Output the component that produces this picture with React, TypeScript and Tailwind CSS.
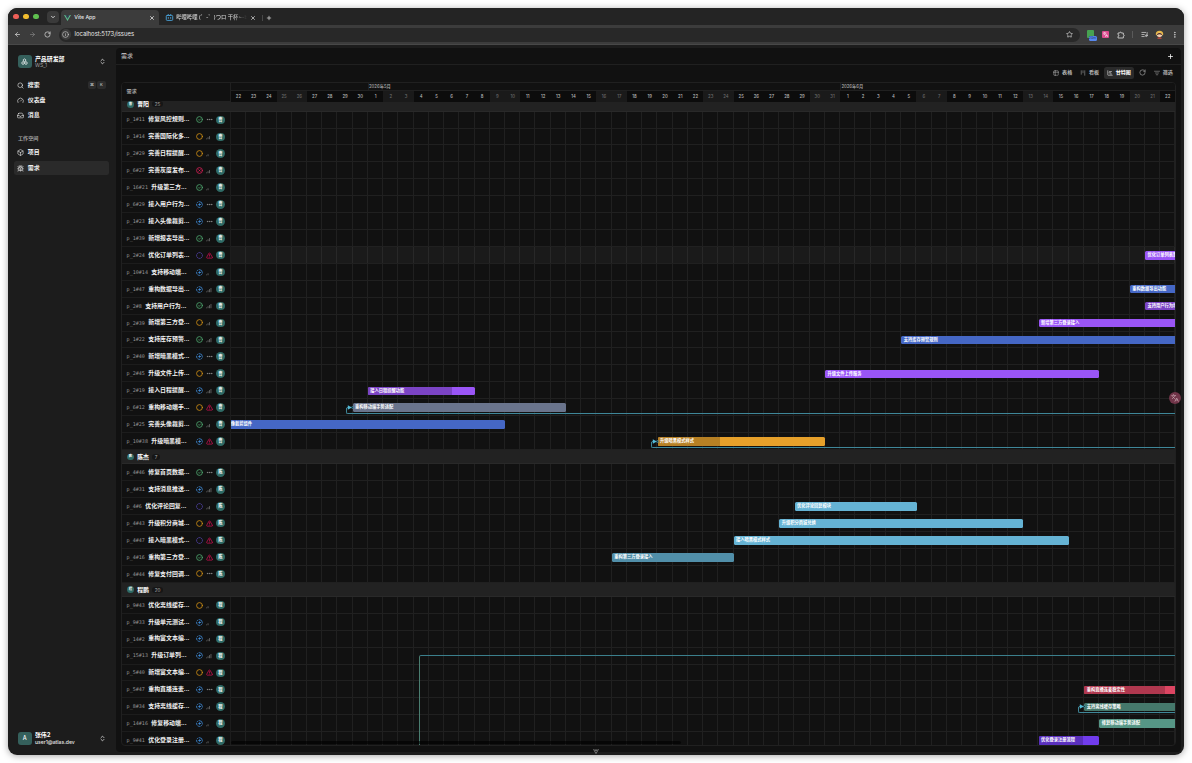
import type { ReactNode } from "react"
import {
  ArrowLeft,
  ArrowRight,
  Box,
  Bug,
  ChartGantt,
  ChevronDown,
  ChevronsUpDown,
  CircleDashed,
  Ellipsis,
  EllipsisVertical,
  Gauge,
  Inbox,
  Info,
  Kanban,
  Languages,
  ListFilter,
  ListMusic,
  Plus,
  RotateCw,
  Search,
  Star,
  Table2,
  TriangleAlert,
  X,
} from "lucide-react"

const DAY = 15.24

type Status = "done" | "todo" | "cancel" | "progress" | "backlog"
type Priority = "none" | "low" | "medium" | "high" | "urgent"

type Bar = {
  start: number
  end: number
  label: string
  color: string
  // darker part of the bar, in days
  fill?: number
  fillColor?: string
  linked?: boolean
}

type Issue = {
  id: string
  title: string
  status: Status
  priority: Priority
  bar?: Bar
  hover?: boolean
}

const row = (id: string, title: string, status: Status, priority: Priority, bar?: Bar, hover?: boolean): Issue => ({
  id,
  title,
  status,
  priority,
  bar,
  hover,
})

const groups: { name: string; count: number; issues: Issue[] }[] = [
  {
    name: "曹阳",
    count: 25,
    issues: [
      row("p_1#11", "修复风控规则...", "done", "none"),
      row("p_1#14", "完善国际化多...", "todo", "medium"),
      row("p_2#29", "完善日程提醒...", "todo", "low"),
      row("p_6#27", "完善灰度发布...", "cancel", "medium"),
      row("p_16#21", "升级第三方...", "done", "low"),
      row("p_6#29", "接入用户行为...", "progress", "none"),
      row("p_1#23", "接入头像裁剪...", "progress", "none"),
      row("p_1#39", "新增报表导出...", "done", "medium"),
      row("p_2#24", "优化订单列表...", "backlog", "urgent", { start: 60, end: 70, label: "优化订单列表默认排序", color: "#9a55f6" }, true),
      row("p_10#14", "支持移动端...", "progress", "low"),
      row("p_1#47", "重构数据导出...", "progress", "high", { start: 59, end: 70, label: "重构数据导出功能", color: "#4567c5" }),
      row("p_2#8", "支持用户行为...", "done", "high", { start: 60, end: 70, label: "支持用户行为埋点", color: "#7b44c5" }),
      row("p_2#39", "新增第三方登...", "todo", "medium", { start: 53, end: 70, label: "新增第三方登录接入", color: "#9a55f6" }),
      row("p_1#22", "支持库存预警...", "done", "high", { start: 44, end: 70, label: "支持库存预警规则", color: "#4567c5" }),
      row("p_2#40", "新增暗黑模式...", "progress", "none"),
      row("p_2#45", "升级文件上传...", "todo", "none", { start: 39, end: 57, label: "升级文件上传服务", color: "#9a55f6" }),
      row("p_2#19", "接入日程提醒...", "progress", "high", { start: 9, end: 16, label: "接入日程提醒功能", color: "#9a55f6", fill: 5.5, fillColor: "#7b44c5" }),
      row("p_6#12", "重构移动端手...", "todo", "urgent", { start: 8, end: 22, label: "重构移动端手势适配", color: "#6a748c", linked: true }),
      row("p_1#25", "完善头像裁剪...", "done", "medium", { start: -1, end: 18, label: "完善头像裁剪组件", color: "#4567c5" }),
      row("p_10#38", "升级暗黑模...", "progress", "urgent", { start: 28, end: 39, label: "升级暗黑模式样式", color: "#e6a02a", fill: 4.1, fillColor: "#b68024", linked: true }),
    ],
  },
  {
    name: "陈杰",
    count: 7,
    issues: [
      row("p_4#46", "修复首页数据...", "done", "none"),
      row("p_4#31", "支持消息推送...", "progress", "high"),
      row("p_4#6", "优化评论回复...", "backlog", "medium", { start: 37, end: 45, label: "优化评论回复模块", color: "#65b3d4" }),
      row("p_4#43", "升级积分商城...", "todo", "urgent", { start: 36, end: 52, label: "升级积分商城兑换", color: "#65b3d4" }),
      row("p_4#47", "接入暗黑模式...", "backlog", "urgent", { start: 33, end: 55, label: "接入暗黑模式样式", color: "#65b3d4" }),
      row("p_4#16", "重构第三方登...", "done", "urgent", { start: 25, end: 33, label: "重构第三方登录接入", color: "#518fa9" }),
      row("p_4#44", "修复支付回调...", "todo", "none"),
    ],
  },
  {
    name: "程鹏",
    count: 20,
    issues: [
      row("p_9#43", "优化离线缓存...", "todo", "low"),
      row("p_9#33", "升级单元测试...", "progress", "low"),
      row("p_14#2", "重构富文本编...", "progress", "medium"),
      row("p_15#13", "升级订单列...", "progress", "high"),
      row("p_5#40", "新增富文本编...", "todo", "urgent"),
      row("p_5#47", "重构直播连麦...", "progress", "none", { start: 56, end: 70, label: "重构直播连麦稳定性", color: "#dc4562", fill: 5.3, fillColor: "#b0384f" }),
      row("p_8#34", "支持离线缓存...", "progress", "medium", { start: 56, end: 70, label: "支持离线缓存策略", color: "#45786b", linked: true }),
      row("p_14#16", "修复移动端...", "progress", "low", { start: 57, end: 70, label: "修复移动端手势适配", color: "#569686" }),
      row("p_9#41", "优化登录注册...", "progress", "low", { start: 53, end: 57, label: "优化登录注册流程", color: "#713ced", fill: 2.95, fillColor: "#5a30be" }),
    ],
  },
]

// 22 Apr 2026 - 22 Jun 2026
const days = Array.from({ length: 62 }, (_, i) => {
  const date = new Date(Date.UTC(2026, 3, 22 + i))
  const weekday = date.getUTCDay()
  return { label: date.getUTCDate(), weekend: weekday === 0 || weekday === 6 }
})

const statusColors: Record<Status, string> = {
  done: "text-[#4fa86f]",
  todo: "text-[#d08f14]",
  cancel: "text-[#d61f54]",
  progress: "text-[#3f8bd6]",
  backlog: "text-[#5546b0]",
}

function StatusIcon({ status }: { status: Status }) {
  if (status === "backlog") {
    return <CircleDashed className={`size-[7px] overflow-visible ${statusColors.backlog}`} strokeWidth={3} />
  }
  return (
    <svg
      className={`size-[7px] overflow-visible ${statusColors[status]}`}
      viewBox="0 0 24 24"
      fill="none"
      stroke="currentColor"
      strokeWidth="2.8"
      strokeLinecap="round"
    >
      {status === "progress" ? (
        <>
          <path d="M12 2a10 10 0 0 1 10 10" />
          <path d="M21 16.5a10 10 0 0 1-4.5 4.5M12 22a10 10 0 0 1-5.5-1.6M3 16.5a10 10 0 0 1-1-5.5M4 6a10 10 0 0 1 3-2.600" />
          <circle cx="12" cy="12" r="2.5" fill="currentColor" />
        </>
      ) : (
        <circle cx="12" cy="12" r="10" />
      )}
      {status === "done" && <path d="M8.5 12.500l2.500 2.500 4.500-5" strokeWidth="2.400" />}
      {status === "cancel" && <path d="M9.500 9.500l5 5M14.500 9.500l-5 5" />}
    </svg>
  )
}

function PriorityIcon({ priority }: { priority: Priority }) {
  if (priority === "urgent") return <TriangleAlert className="size-[7px] overflow-visible text-[#c8104e]" strokeWidth={2.6} />
  if (priority === "none") return <Ellipsis className="size-[7px] overflow-visible text-[#8d8d8d]" strokeWidth={2.8} />
  return (
    <svg className="size-[7px] overflow-visible text-[#858585]" viewBox="0 0 24 24" fill="none" stroke="currentColor" strokeWidth="2.200" strokeLinecap="round">
      <path d="M2 20h.01" />
      <path d="M7 20v-4" />
      {priority !== "low" && <path d="M12 20v-8" />}
      {priority === "high" && <path d="M17 20V8" />}
    </svg>
  )
}

function GanttBar({ bar }: { bar: Bar }) {
  return (
    <div
      className="absolute top-[4.2px] h-[8.5px] overflow-hidden rounded-[1.5px]"
      style={{ left: bar.start * DAY, width: (bar.end - bar.start) * DAY, backgroundColor: bar.color }}
    >
      {bar.fill && <div className="absolute inset-y-0 left-0" style={{ width: bar.fill * DAY, backgroundColor: bar.fillColor }} />}
      <span className="relative block pl-[2.4px] text-[4.25px] leading-[8.5px] font-bold whitespace-nowrap text-white">{bar.label}</span>
    </div>
  )
}

// dependency line that enters the bar from the right side of the chart
function Dependency({ start }: { start: number }) {
  return (
    <>
      <div
        className="absolute top-[9px] right-0 h-[6px] rounded-bl-[2px] border-b border-l border-[#3f8799]"
        style={{ left: start * DAY - 6.5 }}
      />
      <svg className="absolute top-[5px] h-[7px] w-[8px] overflow-visible" style={{ left: start * DAY - 6.5 }} viewBox="0 0 8 7">
        <path d="M.5 5V4.500Q.5 3.500 2 3.500" fill="none" stroke="#3f8799" />
        <path d="M1.800 1.200L5.800 3.500L1.800 5.700Z" fill="#55bcd8" />
        <circle cx="6.500" cy="3.500" r="1" fill="#1b3d47" stroke="#4fb0cc" strokeWidth=".5" />
      </svg>
    </>
  )
}

function IssueRow({ issue, avatar }: { issue: Issue; avatar: string }) {
  return (
    <div className="flex h-[16.93px] shrink-0">
      <div className="flex w-[108.8px] shrink-0 items-center border-b border-[#1c1c1c] pt-[0.6px] pl-[4.6px]">
        <span className="pt-[0.8px] font-['DejaVu_Sans_Mono'] text-[5.07px] text-[#949494]">{issue.id}</span>
        <span className="ml-[3.4px] text-[5.93px] font-semibold whitespace-nowrap text-[#f2f2f2]">{issue.title}</span>
        <div className="ml-auto flex items-center pr-[6.2px]">
          <StatusIcon status={issue.status} />
          <div className="ml-[3.2px]">
            <PriorityIcon priority={issue.priority} />
          </div>
          <span className="ml-[3.4px] grid size-[8.5px] place-items-center rounded-full bg-[#2f6b66] text-[4.25px] leading-none font-bold text-white">
            {avatar}
          </span>
        </div>
      </div>
      <div className={`relative flex-1 overflow-hidden border-b border-[#202020] ${issue.hover ? "bg-white/4" : ""}`}>
        {issue.bar && <GanttBar bar={issue.bar} />}
        {issue.bar?.linked && <Dependency start={issue.bar.start} />}
      </div>
    </div>
  )
}

function GroupRow({ name, count }: { name: string; count: number }) {
  return (
    <div className="flex h-[14.2px] shrink-0 items-center border-b border-[#292929] bg-[#222222] pt-[0.6px] pl-[5px]">
      <span className="grid size-[6.8px] place-items-center rounded-full bg-[#2f6b66] text-[3.4px] leading-none font-bold text-white">
        {name[0]}
      </span>
      <span className="ml-[3.4px] text-[5.93px] leading-[8px] font-bold text-white">{name}</span>
      <span className="ml-[3px] rounded-full bg-[#161616] px-[2.6px] text-[4.66px] leading-[6px] text-[#a8a8a8]">{count}</span>
    </div>
  )
}

function Gantt() {
  return (
    <div className="relative mx-[5px] mb-[6px] flex min-h-0 flex-1 flex-col overflow-hidden rounded-[4px] border border-[#202020]">
      {/* Header */}
      <div className="relative z-10 flex h-[18.4px] shrink-0 bg-[#111111]">
        <div className="flex w-[108.8px] shrink-0 items-center border-r border-[#202020] pl-[4.6px] text-[5.08px] font-semibold text-[#a3a3a3]">
          需求
        </div>
        <div className="flex min-w-0 flex-1 flex-col">
          <div className="flex h-[8.4px] border-b border-[#202020] text-[4.25px] leading-[8px] font-medium text-[#b0b0b0]">
            <div className="w-[137.2px] shrink-0" />
            <div className="w-[472.4px] shrink-0 border-l border-[#202020]">2026年5月</div>
            <div className="border-l border-[#202020]">2026年6月</div>
          </div>
          <div className="flex flex-1">
            {days.map((day, i) => (
              <div
                key={i}
                className={`w-[15.24px] shrink-0 text-center text-[4.25px] leading-[11.4px] font-medium ${
                  day.weekend ? "bg-[#1a1a1a] text-[#6c6c6c]" : "bg-[#0c0c0c] text-[#bdbdbd]"
                }`}
              >
                {day.label}
              </div>
            ))}
          </div>
        </div>
      </div>

      {/* Rows */}
      <div className="relative min-h-0 flex-1">
        <div className="absolute inset-0 flex overflow-hidden">
          <div className="w-[108.8px] shrink-0 border-r border-[#1d1d1d]" />
          {days.map((_, i) => (
            <div key={i} className="w-[15.24px] shrink-0 border-r border-[#202020]" />
          ))}
        </div>
        <div className="relative -mt-[3.5px] flex flex-col">
          {groups.map((group) => (
            <div key={group.name}>
              <GroupRow name={group.name} count={group.count} />
              {group.issues.map((issue) => (
                <IssueRow key={issue.id} issue={issue} avatar={group.name[0]} />
              ))}
            </div>
          ))}
        </div>
        {/* Dependency that leaves the visible area */}
        <div className="absolute right-0 bottom-0 left-[297px] h-[90.5px] rounded-tl-[2px] border-t border-l border-t-[#3b7f8c] border-l-[#4a7d70]" />
        <div className="absolute bottom-[1px] left-[109px] h-[3px] w-[450px] rounded-full bg-black/60" />
      </div>
    </div>
  )
}

function NavItem({ icon, label, active, children }: { icon: ReactNode; label: string; active?: boolean; children?: ReactNode }) {
  return (
    <div
      className={`flex h-[13.5px] items-center rounded-[2.5px] px-[3.4px] pt-[0.5px] text-[5.93px] font-semibold text-[#efefef] ${
        active ? "bg-[#2a2a2a]" : ""
      }`}
    >
      {icon}
      <span className="ml-[3.4px]">{label}</span>
      {children}
    </div>
  )
}

function Sidebar() {
  return (
    <aside className="flex w-[108px] shrink-0 flex-col pt-[6.5px] pr-[7px] pb-[6.5px] pl-[6px]">
      <div className="flex h-[20px] items-center px-[4px]">
        <div className="grid size-[13.5px] place-items-center rounded-[3px] bg-[#35605c] text-white">
          <svg className="size-[7px] overflow-visible" viewBox="0 0 24 24" fill="none" stroke="currentColor" strokeWidth="2.5" strokeLinejoin="round">
            <path d="M12 3l4 2.4v4.6l-4 2.4-4-2.4V5.4zM7 12.5l4 2.4v4.600L7 22l-4-2.500v-4.600zM17 12.500l4 2.400v4.600L17 22l-4-2.500v-4.600z" />
          </svg>
        </div>
        <div className="ml-[3.4px] flex flex-col">
          <span className="text-[5.93px] leading-[7.5px] font-bold text-white">产品研发部</span>
          <span className="text-[5.08px] leading-[6.5px] text-[#a0a0a0]">WS_1</span>
        </div>
        <ChevronsUpDown className="-mr-[1px] ml-auto size-[7px] overflow-visible text-[#e5e5e5]" strokeWidth={2.6} />
      </div>

      <nav className="mt-[6.5px] flex flex-col gap-[1.7px]">
        <NavItem icon={<Search className="size-[7px] overflow-visible" />} label="搜索">
          <div className="ml-auto flex gap-[1px] text-[4px] leading-[8px] text-[#b0b0b0]">
            <kbd className="w-[8.5px] rounded-[2px] bg-[#2c2c2c] text-center font-sans">⌘</kbd>
            <kbd className="w-[8.5px] rounded-[2px] bg-[#2c2c2c] text-center font-['Inter']">K</kbd>
          </div>
        </NavItem>
        <NavItem icon={<Gauge className="size-[7px] overflow-visible" />} label="仪表盘" />
        <NavItem icon={<Inbox className="size-[7px] overflow-visible" />} label="消息" />
      </nav>

      <div className="mt-[10.5px] px-[4px] text-[5.08px] leading-[13.5px] font-semibold text-[#a3a3a3]">工作空间</div>
      <nav className="flex flex-col gap-[1.7px]">
        <NavItem icon={<Box className="size-[7px] overflow-visible" />} label="项目" />
        <NavItem icon={<Bug className="size-[7px] overflow-visible" />} label="需求" active />
      </nav>

      <div className="mt-auto flex h-[20px] items-center px-[4px]">
        <div className="grid size-[13.5px] place-items-center rounded-[3px] bg-[#35605c] text-[5.5px] font-medium text-white">A</div>
        <div className="ml-[3.4px] flex flex-col">
          <span className="text-[5.93px] leading-[7.5px] font-bold text-white">张伟2</span>
          <span className="text-[5.08px] leading-[7px] font-medium text-[#e5e5e5]">user1@atlas.dev</span>
        </div>
        <ChevronsUpDown className="-mr-[1px] ml-auto size-[7px] overflow-visible text-[#e5e5e5]" strokeWidth={2.6} />
      </div>
    </aside>
  )
}

function ViewTab({ icon, label, active }: { icon: ReactNode; label?: string; active?: boolean }) {
  return (
    <div
      className={`flex h-[11.8px] items-center gap-[2.6px] rounded-[2.5px] px-[3.2px] text-[5.08px] font-semibold ${
        active ? "bg-[#2a2a2a] text-white" : "text-[#b5b5b5]"
      }`}
    >
      {icon}
      {label && <span>{label}</span>}
    </div>
  )
}

function BrowserChrome() {
  return (
    <header className="shrink-0">
      {/* Tabs */}
      <div className="flex h-[17px] items-end bg-[#242424]">
        <div className="flex h-full items-center gap-[4.2px] pl-[5px]">
          <span className="size-[5.8px] rounded-full bg-[#ed5f57]" />
          <span className="size-[5.8px] rounded-full bg-[#f2bd2e]" />
          <span className="size-[5.8px] rounded-full bg-[#5fc04f]" />
        </div>
        <div className="mb-[2px] ml-[8px] grid size-[12px] place-items-center rounded-[4px] bg-[#3a3a3a]">
          <ChevronDown className="size-[6px] text-white" strokeWidth={3} />
        </div>
        <div className="ml-[2px] flex h-[15px] w-[98px] items-center rounded-t-[4px] bg-[#3c3c3c] px-[3.5px] text-[5.2px] font-medium text-[#e8e8e8]">
          <svg className="h-[6px] w-[7px]" viewBox="0 0 28 24">
            <path d="M0 0h5.6L14 14.5 22.4 0H28L14 24z" fill="#5dbb8a" />
            <path d="M5.6 0h5.2L14 5.5 17.2 0h5.2L14 14.5z" fill="#35495e" />
          </svg>
          <span className="ml-[3px]">Vite App</span>
          <X className="ml-auto size-[6px]" strokeWidth={3} />
        </div>
        <div className="flex h-[15px] w-[99px] items-center pr-[2px] pl-[7px] text-[5.3px] font-medium text-[#d0d0d0]">
          <svg className="size-[7px] shrink-0 overflow-visible text-[#4aa7df]" viewBox="0 0 24 24" fill="none" stroke="currentColor" strokeWidth="3" strokeLinecap="round">
            <rect x="1" y="5" width="22" height="17" rx="3" />
            <path d="M7 1l3 3M17 1l-3 3M8 12v3M16 12v3" />
          </svg>
          <span className="ml-[3.5px] w-[71px] overflow-hidden [mask-image:linear-gradient(to_right,black_80%,transparent)] whitespace-nowrap">
            哔哩哔哩 (゜-゜)つロ 干杯~-bilibili
          </span>
          <X className="ml-auto size-[6px] shrink-0" strokeWidth={3} />
        </div>
        <div className="mb-[4.5px] ml-[4px] h-[6px] w-px bg-[#484848]" />
        <Plus className="mb-[4.5px] ml-[3.5px] size-[6px] overflow-visible text-[#dedede]" strokeWidth={2.8} />
      </div>

      {/* Address bar */}
      <div className="flex h-[20px] items-center border-b border-[#484848] bg-[#3c3c3c] px-[6px] text-[#d4d4d4]">
        <ArrowLeft className="size-[7px]" strokeWidth={2.5} />
        <ArrowRight className="ml-[8px] size-[7px] text-[#808080]" strokeWidth={2.5} />
        <RotateCw className="ml-[8px] size-[7px] overflow-visible" strokeWidth={2.5} />
        <div className="ml-[7.5px] flex h-[14px] flex-1 items-center rounded-full bg-[#282828] pr-[7px] pl-[2px]">
          <span className="grid size-[10.5px] place-items-center rounded-full bg-[#3c3c3c]">
            <Info className="size-[7px] overflow-visible" />
          </span>
          <span className="ml-[3.5px] text-[5.9px] text-[#e8e8e8]">localhost:5173/issues</span>
          <Star className="ml-auto size-[7px] overflow-visible" strokeWidth={2.3} />
        </div>
        <div className="ml-[7px] flex items-center">
          <div className="relative size-[9px]">
            <div className="size-[7.5px] rounded-[1px] bg-[#47a251]" />
            <div className="absolute right-[-1px] bottom-[-1.5px] h-[5px] w-[8px] rounded-[1.5px] bg-[#5787ec] text-center text-[3.5px] leading-[5px] text-[#1c3470]">
              20m
            </div>
          </div>
          <div className="ml-[6.5px] grid size-[7px] place-items-center rounded-[1px] bg-[#dd4b8e]">
            <Languages className="size-[5px] text-white" strokeWidth={2.5} />
          </div>
          <svg className="ml-[8px] size-[8px] overflow-visible" viewBox="0 0 24 24" fill="none" stroke="currentColor" strokeWidth="2.6" strokeLinejoin="round">
            <path d="M3 6h5a2.500 2.500 0 0 1 5 0h6v5a2.500 2.500 0 0 1 0 5v5H3v-5a2.500 2.500 0 0 0 0-5z" />
          </svg>
          <div className="ml-[7px] h-[7px] w-px bg-[#5a5a5a]" />
          <ListMusic className="ml-[8px] size-[7px] overflow-visible" strokeWidth={2.5} />
          <svg className="ml-[7px] size-[9px]" viewBox="0 0 24 24">
            <path d="M2 12Q2 2 12 2t10 10l-3 2H5z" fill="#e8b84a" />
            <path d="M5 11q7-7 14 0v5q-7 6-14 0z" fill="#f3cfae" />
            <path d="M5 11q7-6 14 0l-1 2q-6-4-12 0z" fill="#4a2a20" />
            <path d="M8 20h8l2 3H6z" fill="#cf4a3c" />
          </svg>
          <EllipsisVertical className="ml-[6.5px] size-[7.5px]" strokeWidth={2.5} />
        </div>
      </div>
    </header>
  )
}

export default function App() {
  return (
    <div className="h-[763px] w-[1192px] overflow-hidden bg-white px-[8px] pt-[8px] font-['Inter','Noto_Sans_CJK_SC',sans-serif]">
      <div className="relative flex h-[747px] w-[1176px] flex-col overflow-hidden rounded-[9px] bg-[#1c1c1c] shadow-[0_1px_7px_rgba(0,0,0,0.35)]">
        <BrowserChrome />
        <div className="flex min-h-0 flex-1">
          <Sidebar />
          <main className="mt-[3px] mr-[3px] mb-[3px] flex min-w-0 flex-1 flex-col rounded-[4px] bg-[#111111]">
            <div className="flex h-[16.5px] items-center border-b border-[#202020] px-[5px] pt-[0.8px] text-[5.93px] font-medium text-[#b5b5b5]">
              <span>需求</span>
              <Plus className="mr-[2px] ml-auto size-[7px] overflow-visible text-white" strokeWidth={2.6} />
            </div>
            <div className="flex h-[17px] items-center justify-end gap-[1.7px] pr-[5px]">
              <ViewTab icon={<Table2 className="size-[6px] overflow-visible" />} label="表格" />
              <ViewTab icon={<Kanban className="size-[6px] overflow-visible" />} label="看板" />
              <ViewTab icon={<ChartGantt className="size-[6px] overflow-visible" />} label="甘特图" active />
              <ViewTab icon={<RotateCw className="size-[7px] overflow-visible" />} />
              <ViewTab icon={<ListFilter className="size-[6px] overflow-visible" />} label="筛选" />
            </div>
            <Gantt />
          </main>
        </div>

        {/* Devtools toggle */}
        <svg className="absolute bottom-[1px] left-[585px] h-[5px] w-[6px]" viewBox="0 0 28 24">
          <path d="M2 1L14 22 26 1M9 1l5 9 5-9" fill="none" stroke="#8a8a8a" strokeWidth="4" />
        </svg>

        {/* Translate button */}
        <div className="absolute top-[384px] right-[3px] grid size-[12px] place-items-center rounded-full bg-[#713549] text-[#c9a7b2]">
          <Languages className="size-[8px]" />
        </div>
      </div>
    </div>
  )
}
